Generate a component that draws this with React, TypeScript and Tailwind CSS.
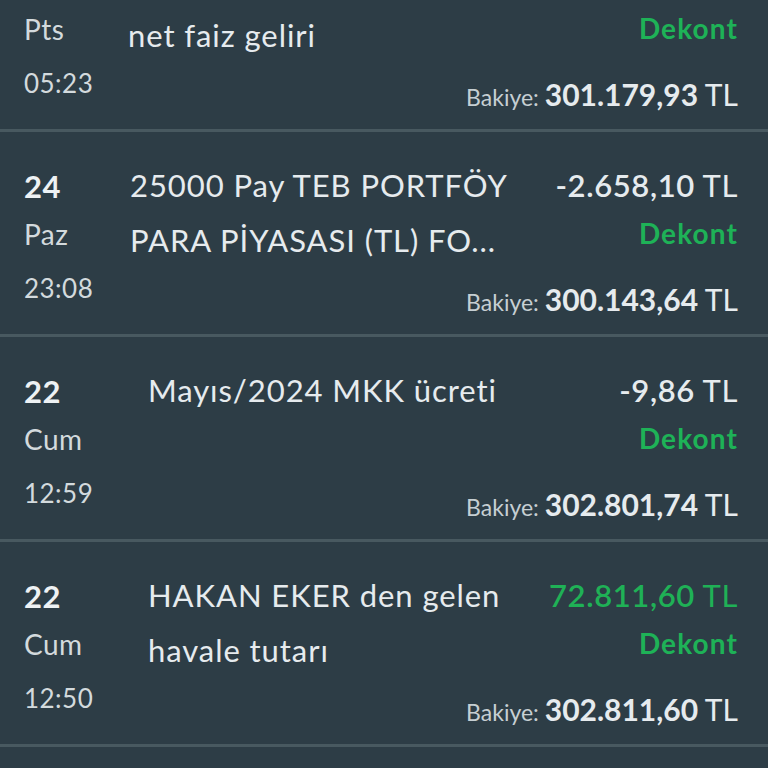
import React from 'react';

type Row = {
  day: string;
  dayName: string;
  time: string;
  titleLines: string[];
  titleOffset: string;
  amount: string;
  positive?: boolean;
  balance: string;
};

const rows: Row[] = [
  {
    day: '',
    dayName: 'Pts',
    time: '05:23',
    titleLines: ['\u00A0', 'net faiz geliri'],
    titleOffset: 'pl-[104px]',
    amount: '',
    balance: '301.179,93',
  },
  {
    day: '24',
    dayName: 'Paz',
    time: '23:08',
    titleLines: ['25000 Pay TEB PORTFÖY', 'PARA PİYASASI (TL) FO...'],
    titleOffset: 'pl-[106px]',
    amount: '-2.658,10',
    balance: '300.143,64',
  },
  {
    day: '22',
    dayName: 'Cum',
    time: '12:59',
    titleLines: ['Mayıs/2024 MKK ücreti'],
    titleOffset: 'pl-[124px]',
    amount: '-9,86',
    balance: '302.801,74',
  },
  {
    day: '22',
    dayName: 'Cum',
    time: '12:50',
    titleLines: ['HAKAN EKER den gelen', 'havale tutarı'],
    titleOffset: 'pl-[124px]',
    amount: '72.811,60',
    positive: true,
    balance: '302.811,60',
  },
];

function TransactionRow({ row }: { row: Row }) {
  return (
    <div className="relative flex h-[205px] border-b-[3px] border-[#485960] pl-6 pr-[30px]">
      {/* date */}
      <div className="flex w-0 flex-col pt-[30px] tracking-[0.03em] text-[#d3dadd]">
        <div className="h-[48px] whitespace-nowrap text-[31px] font-bold leading-[48px] text-[#eef2f4]">{row.day}</div>
        <div className="h-[48px] whitespace-nowrap text-[28px] leading-[48px]">{row.dayName}</div>
        <div className="mt-[6px] h-[48px] whitespace-nowrap text-[26px] leading-[48px]">{row.time}</div>
      </div>

      {/* title */}
      <div className={`min-w-0 flex-1 pt-[26px] ${row.titleOffset}`}>
        {row.titleLines.map((l, i) => (
          <div key={i} className="whitespace-nowrap text-[31px] leading-[55px] tracking-[0.03em] text-[#e6ebee]">
            {l}
          </div>
        ))}
      </div>

      {/* amount / receipt / balance */}
      <div className="flex shrink-0 flex-col items-end pb-[9px] pt-[29px]">
        <div
          className={`h-[48px] whitespace-nowrap text-[31px] leading-[48px] tracking-[0.02em] ${
            row.positive ? 'text-[#1fb156]' : 'text-[#e6ebee]'
          }`}
        >
          {row.amount && (
            <>
              <span className="font-semibold">{row.amount}</span> TL
            </>
          )}
        </div>
        <div className="h-[48px] text-[28px] font-bold leading-[48px] tracking-[0.04em] text-[#1eb257]">Dekont</div>
        <div className="mt-auto whitespace-nowrap leading-[40px] text-[#e6ebee]">
          <span className="text-[23px] text-[#c6cfd3]">Bakiye: </span>
          <span className="text-[30px] font-bold">{row.balance}</span>
          <span className="text-[30px]"> TL</span>
        </div>
      </div>
    </div>
  );
}

export default function App() {
  return (
    <div
      className="h-[768px] w-[768px] overflow-hidden bg-[#2d3d46]"
      style={{ fontFamily: "Lato, 'Noto Sans', sans-serif" }}
    >
      <div className="-mt-[73px]">
        {rows.map((r, i) => (
          <TransactionRow key={i} row={r} />
        ))}
      </div>
    </div>
  );
}
